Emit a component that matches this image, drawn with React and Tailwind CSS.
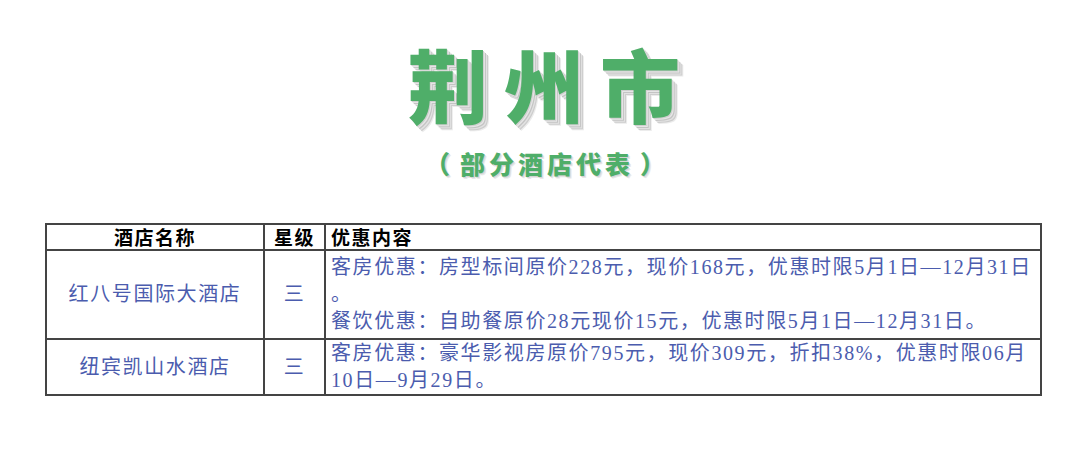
import React from 'react';

const serif = { fontFamily: '"Liberation Serif", "Noto Sans CJK SC", serif' };

function Title() {
  return (
    <div className="flex flex-col items-center">
      {/* big title with hatched drop shadow */}
      <div
        className="flex gap-[16px] h-[92px] pl-[8px] text-[80px] leading-[88px] font-black text-[#4fae69] [font-family:'Noto_Sans_CJK_SC',sans-serif] [text-shadow:1px_1px_0_#cfcfcf,2px_2px_0_#e6e6e6,3px_3px_0_#c4c4c4,4px_4px_0_#e2e2e2,5px_5px_0_#cdcdcd,6px_6px_0_#ececec]"
      >
        <span>荆</span>
        <span>州</span>
        <span>市</span>
      </div>
      <div className="flex items-center mt-[18px] h-[30px] pl-[10px] text-[25px] leading-[30px] font-black text-[#4fae69] [font-family:'Noto_Sans_CJK_SC',sans-serif] [text-shadow:1px_1px_0_#d4d4d4,2px_2px_0_#e8e8e8]">
        <span className="mr-[10px]">（</span>
        <span className="tracking-[4px]">部分酒店代表</span>
        <span className="ml-[6px]">）</span>
      </div>
    </div>
  );
}

export default function App() {
  return (
    <div className="w-[1080px] h-[450px] bg-white overflow-hidden">
      <div className="pt-[38px]">
        <Title />
      </div>

      <div className="mt-[45px] ml-[45px] w-[997px]">
        <table className="w-full border-collapse table-fixed" style={serif}>
          <colgroup>
            <col className="w-[218px]" />
            <col className="w-[61px]" />
            <col />
          </colgroup>
          <thead>
            <tr className="h-[26px]">
              <th className="border-2 border-[#444] text-[19px] leading-[22px] font-bold text-black tracking-[1.5px] text-center p-0 [font-family:'Noto_Sans_CJK_SC',sans-serif]">
                酒店名称
              </th>
              <th className="border-2 border-[#444] text-[19px] leading-[22px] font-bold text-black tracking-[1.5px] text-center p-0 [font-family:'Noto_Sans_CJK_SC',sans-serif]">
                星级
              </th>
              <th className="border-2 border-[#444] text-[19px] leading-[22px] font-bold text-black tracking-[1.5px] text-left px-[5px] py-0 [font-family:'Noto_Sans_CJK_SC',sans-serif]">
                优惠内容
              </th>
            </tr>
          </thead>
          <tbody className="text-[#4b5cae] text-[20px] leading-[27px] tracking-[1.6px]">
            <tr className="h-[89px]">
              <td className="border-2 border-[#444] text-center p-0">红八号国际大酒店</td>
              <td className="border-2 border-[#444] text-center p-0">三</td>
              <td className="border-2 border-[#444] px-[5px] py-[3px] align-top">
                <div className="whitespace-nowrap">客房优惠：房型标间原价228元，现价168元，优惠时限5月1日—12月31日</div>
                <div className="whitespace-nowrap">。</div>
                <div className="whitespace-nowrap">餐饮优惠：自助餐原价28元现价15元，优惠时限5月1日—12月31日。</div>
              </td>
            </tr>
            <tr className="h-[56px]">
              <td className="border-2 border-[#444] text-center p-0">纽宾凯山水酒店</td>
              <td className="border-2 border-[#444] text-center p-0">三</td>
              <td className="border-2 border-[#444] px-[5px] py-0 align-top">
                <div className="whitespace-nowrap">客房优惠：豪华影视房原价795元，现价309元，折扣38%，优惠时限06月</div>
                <div className="whitespace-nowrap">10日—9月29日。</div>
              </td>
            </tr>
          </tbody>
        </table>
      </div>
    </div>
  );
}
